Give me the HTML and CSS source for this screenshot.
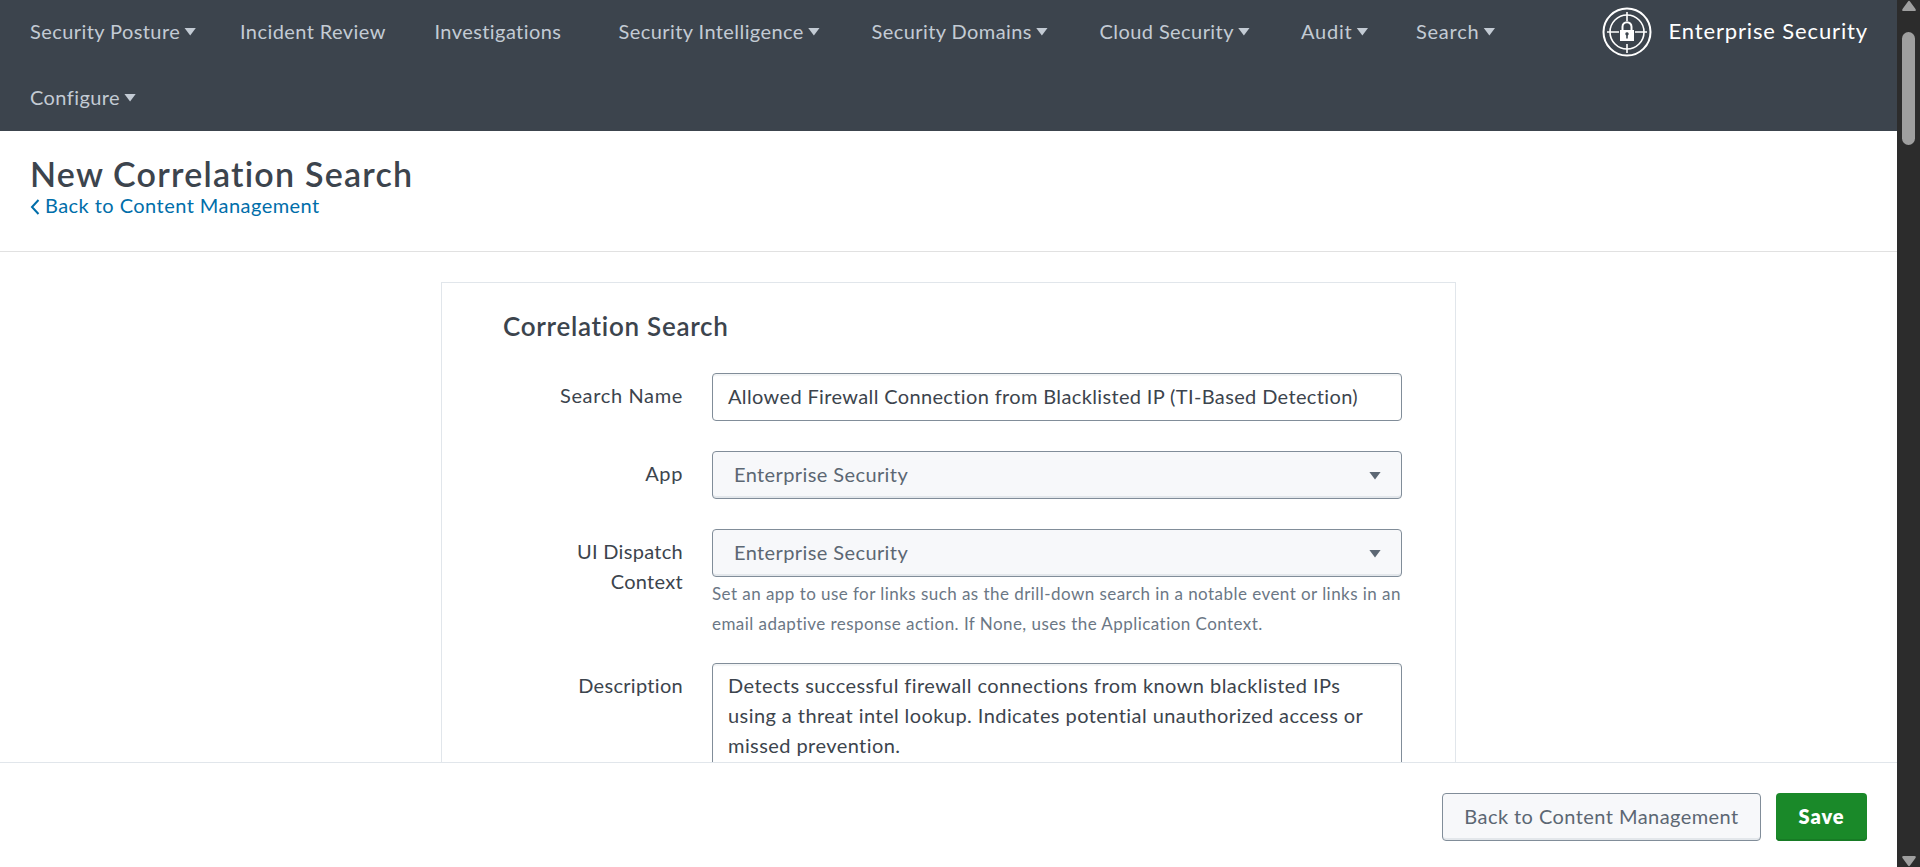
FILE: index.html
```html
<!DOCTYPE html>
<html lang="en">
<head>
<meta charset="utf-8">
<title>New Correlation Search</title>
<link rel="stylesheet" href="styles.css">
</head>
<body>
<div class="window">
  <div class="page">
    <header class="navbar">
      <nav class="menu">
        <a class="menu-item">Security Posture<i class="caret"></i></a>
        <a class="menu-item">Incident Review</a>
        <a class="menu-item">Investigations</a>
        <a class="menu-item">Security Intelligence<i class="caret"></i></a>
        <a class="menu-item">Security Domains<i class="caret"></i></a>
        <a class="menu-item">Cloud Security<i class="caret"></i></a>
        <a class="menu-item menu-item-short">Audit<i class="caret"></i></a>
        <a class="menu-item menu-item-short">Search<i class="caret"></i></a>
        <a class="menu-item">Configure<i class="caret"></i></a>
      </nav>
      <div class="brand">
        <svg class="brand-logo" viewBox="0 0 50 50" fill="none" stroke="#fff">
          <circle cx="25" cy="25" r="23.5" stroke-width="2"/>
          <circle cx="25" cy="25" r="17" stroke-width="1.6"/>
          <path d="M25 5v9M25 37v9M5 25h12M33 25h12" stroke-width="1.6"/>
          <path d="M20.5 24v-4.300a4.500 4.500 0 0 1 9 0V24" stroke-width="2"/>
          <rect x="18" y="23" width="14" height="11" fill="#fff" stroke="none"/>
          <path d="M23.300 27a1.700 1.700 0 1 1 2.500 1.400V31.500h-1.600v-3.100A1.700 1.700 0 0 1 23.300 27z" fill="#3c444d" stroke="none"/>
        </svg>
        <span>Enterprise Security</span>
      </div>
    </header>

    <section class="page-header">
      <h1 class="page-title">New Correlation Search</h1>
      <a class="back-link"><svg class="chevron" viewBox="0 0 10 16" fill="none" stroke="#006eaa" stroke-width="2"><path d="M8.500 1 2 8l6.500 7"/></svg>Back to Content Management</a>
    </section>

    <main class="content">
      <form class="card">
        <h2 class="card-title">Correlation Search</h2>
        <div class="row">
          <label class="label">Search Name</label>
          <div class="control text-input">Allowed Firewall Connection from Blacklisted IP (TI-Based Detection)</div>
        </div>
        <div class="row">
          <label class="label">App</label>
          <div class="control select">Enterprise Security<i class="caret caret-select"></i></div>
        </div>
        <div class="row">
          <label class="label label-tight">UI Dispatch<br>Context</label>
          <div>
            <div class="control select">Enterprise Security<i class="caret caret-select"></i></div>
            <p class="help">Set an app to use for links such as the drill-down search in a notable event or links in an<br>email adaptive response action. If None, uses the Application Context.</p>
          </div>
        </div>
        <div class="row">
          <label class="label label-tight">Description</label>
          <div class="control textarea">Detects successful firewall connections from known blacklisted IPs<br>using a threat intel lookup. Indicates potential unauthorized access or<br>missed prevention.</div>
        </div>
      </form>
    </main>

    <footer class="footer">
      <button class="button">Back to Content Management</button>
      <button class="button button-primary">Save</button>
    </footer>
  </div>

  <div class="scrollbar">
    <svg class="arrow" viewBox="0 0 16 12"><path d="M7 1.500Q8 0 9 1.500L14.500 9Q15.500 11 13.500 11h-11Q.5 11 1.500 9z" fill="#9f9f9f"/></svg>
    <div class="thumb"></div>
    <svg class="arrow arrow-down" viewBox="0 0 16 12"><path d="M7 1.500Q8 0 9 1.500L14.500 9Q15.500 11 13.500 11h-11Q.5 11 1.500 9z" fill="#9f9f9f"/></svg>
  </div>
</div>
</body>
</html>
```
FILE: styles.css
```css
* { box-sizing: border-box; }

body {
  margin: 0;
  background: #fff;
  color: #3c444d;
  font: 20px/30px Lato, sans-serif;
  letter-spacing: .45px;
}

h1, h2, p { margin: 0; }

.window { display: flex; height: 867px; overflow: hidden; }
.page { display: flex; flex-direction: column; width: 1897px; height: 867px; }

/* Top navigation */
.navbar {
  display: flex;
  justify-content: space-between;
  flex: none;
  height: 131px;
  padding: 0 29px 0 30px;
  background: #3c444d;
}
.menu {
  display: grid;
  grid-template-columns: 210px 194.5px 184px 253px 228px 201.5px 115px auto;
  grid-auto-rows: 66px;
  align-content: start;
}
.menu-item {
  display: flex;
  align-items: center;
  height: 62px;
  color: #c3cbd4;
  letter-spacing: .42px;
  white-space: nowrap;
}
.menu-item-short { letter-spacing: .75px; }
.caret {
  flex: none;
  width: 12px;
  height: 8px;
  margin: 1px 0 0 4px;
  background: #c3cbd4;
  clip-path: polygon(0 0, 100% 0, 50% 100%);
}
.brand {
  display: flex;
  align-items: center;
  gap: 17px;
  height: 63px;
  color: #fff;
  font-size: 22px;
  letter-spacing: .86px;
  white-space: nowrap;
}
.brand-logo { width: 50px; height: 50px; }
.brand span { padding-bottom: 1px; }

/* Title block */
.page-header {
  flex: none;
  height: 121px;
  padding: 23px 30px 0;
  border-bottom: 1px solid #e1e1e1;
}
.page-title {
  height: 36px;
  font-size: 34px;
  font-weight: 600;
  line-height: 39px;
  letter-spacing: 1.23px;
}
.back-link {
  display: flex;
  align-items: center;
  gap: 5px;
  height: 30px;
  color: #006eaa;
}
.chevron { width: 10px; height: 16px; margin-top: 4px; }

/* Form */
.content { flex: 1; min-height: 0; padding: 30px 441px 0; overflow: hidden; }
.card {
  width: 1015px;
  height: 600px;
  padding: 27px 53px 0 61px;
  border: 1px solid #e1e6eb;
}
.card-title {
  height: 63px;
  font-size: 26px;
  font-weight: 600;
  line-height: 32px;
  letter-spacing: .72px;
}
.row {
  display: grid;
  grid-template-columns: 180px 690px;
  gap: 29px;
  margin-bottom: 30px;
}
.label { padding-top: 7px; text-align: right; letter-spacing: .65px; }
.label-tight { letter-spacing: .3px; }
.control {
  height: 48px;
  border: 1px solid #818d99;
  border-radius: 4px;
  white-space: nowrap;
}
.text-input {
  padding: 7px 15px;
  letter-spacing: .36px;
  box-shadow: inset 0 2px 1px #f2f4f5;
}
.select {
  display: flex;
  align-items: center;
  justify-content: space-between;
  padding: 0 20px 2px 21px;
  background: #f7f8fa;
  color: #5c6773;
  letter-spacing: .4px;
  box-shadow: inset 0 -2px 0 #e3e7eb;
}
.caret-select { margin-top: 3px; background: #5c6773; }
.help {
  height: 56px;
  padding-top: 2px;
  color: #6b7785;
  font-size: 17px;
  letter-spacing: .45px;
  white-space: nowrap;
}
.textarea {
  height: 140px;
  padding: 6px 15px;
  letter-spacing: .43px;
  box-shadow: inset 0 2px 1px #f2f4f5;
}

/* Action bar */
.footer {
  display: flex;
  justify-content: flex-end;
  flex: none;
  gap: 15px;
  height: 105px;
  padding: 30px 30px 0;
  border-top: 1px solid #e1e6eb;
}
.button {
  width: 319px;
  height: 48px;
  padding: 0 0 2px;
  border: 1px solid #818d99;
  border-radius: 4px;
  background: #f7f8fa;
  color: #5c6773;
  font: inherit;
  letter-spacing: .44px;
  box-shadow: inset 0 -2px 0 #e3e7eb;
}
.button-primary {
  width: 91px;
  border: 0;
  background: #1a8929;
  color: #fff;
  font-weight: 800;
  letter-spacing: .9px;
  box-shadow: inset 0 -2px 0 #177b25;
}

/* Window scrollbar */
.scrollbar {
  display: flex;
  flex-direction: column;
  align-items: center;
  width: 23px;
  height: 867px;
  background: #2c2c2c;
}
.arrow { flex: none; width: 16px; height: 12px; }
.thumb {
  width: 13px;
  height: 113px;
  margin: 20px 0 auto;
  border-radius: 7px;
  background: #9f9f9f;
}
.arrow-down { transform: rotate(180deg); }
```
